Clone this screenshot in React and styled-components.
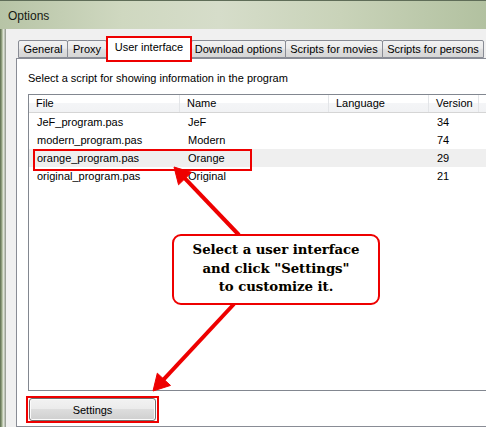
import React from "react";
import styled, { createGlobalStyle } from "styled-components";

const GlobalStyle = createGlobalStyle`
  html, body { margin: 0; padding: 0; background: #f0f0f0; }
  body { font-family: "Liberation Sans", Arial, sans-serif; }
  * { box-sizing: border-box; }
`;

const Window = styled.div`
  position: relative;
  width: 486px;
  height: 427px;
  overflow: hidden;
  display: flex;
  flex-direction: column;
  background: linear-gradient(90deg, #b7c4a6 0%, #cfd8c0 25%, #d6ddca 45%, #c9d3b9 70%, #b2c1a0 100%);
  border-top: 1px solid #5f6d58;
`;

const TitleBar = styled.div`
  height: 28px;
  flex: none;
  display: flex;
  align-items: center;
  padding: 1px 0 0 8px;
  font-size: 12px;
  color: #141a12;
`;

const Body = styled.div`
  flex: 1;
  display: flex;
  min-height: 0;
`;

const FrameEdge = styled.div`
  width: 6px;
  flex: none;
  background: linear-gradient(90deg, #56654a 0, #7d8d6c 1px, #9aa987 2px, #d7ddcd 3px, #e3e8dc 4px, #9ba197 5px);
`;

const Client = styled.div`
  flex: 1;
  min-width: 0;
  background: #f0f0f0;
  padding: 7px 0 0 10px;
  display: flex;
  flex-direction: column;
`;

const TabStrip = styled.div`
  height: 22px;
  flex: none;
  display: flex;
  align-items: flex-end;
  padding-left: 2px;
  position: relative;
  z-index: 2;
`;

const Tab = styled.div`
  position: relative;
  flex: none;
  width: ${(p) => p.$w}px;
  height: ${(p) => (p.$active ? 22 : 18)}px;
  margin-left: ${(p) => (p.$first ? 0 : -1)}px;
  margin-bottom: ${(p) => (p.$active ? -1 : 0)}px;
  border: 1px solid #898c95;
  border-bottom: ${(p) => (p.$active ? "none" : "1px solid #898c95")};
  border-radius: 2px 2px 0 0;
  background: ${(p) =>
    p.$active ? "#ffffff" : "linear-gradient(#f2f2f2 0%, #ebebeb 45%, #dedede 55%, #d6d6d6 100%)"};
  font-size: 11px;
  color: #000;
  display: flex;
  justify-content: center;
  align-items: ${(p) => (p.$active ? "flex-start" : "center")};
  padding-top: ${(p) => (p.$active ? 3 : 0)}px;
  white-space: nowrap;
  z-index: ${(p) => (p.$active ? 2 : 1)};

  ${(p) =>
    p.$marked &&
    `&::after {
      content: "";
      position: absolute;
      left: -1px;
      right: -1px;
      top: -2px;
      bottom: -3px;
      border: 2px solid #ee0000;
    }`}
`;

const Panel = styled.div`
  flex: 1;
  width: 520px;
  background: #ffffff;
  border: 1px solid #898c95;
  padding: 11px 0 0 11px;
  display: flex;
  flex-direction: column;
  align-items: flex-start;
`;

const Hint = styled.p`
  margin: 0 0 8px;
  font-size: 11px;
  line-height: 16px;
  color: #000;
`;

const ListBox = styled.div`
  width: 520px;
  height: 297px;
  border: 1px solid #828790;
  background: #fff;
  flex: none;
`;

const COLS = "151px 149px 100px 50px 1fr";

const HeaderRow = styled.div`
  display: grid;
  grid-template-columns: ${COLS};
  height: 18px;
  background: linear-gradient(#ffffff 0%, #ffffff 45%, #f4f5f7 50%, #f1f2f4 100%);
  border-bottom: 1px solid #d5d5d5;
`;

const HeaderCell = styled.div`
  font-size: 11px;
  line-height: 17px;
  padding-left: 7px;
  border-right: 1px solid #e3e5e8;
  color: #000;
  white-space: nowrap;
`;

const Row = styled.div`
  position: relative;
  display: grid;
  grid-template-columns: ${COLS};
  height: 18px;
  background: ${(p) => (p.$selected ? "#efefef" : "transparent")};

  ${(p) =>
    p.$marked &&
    `&::after {
      content: "";
      position: absolute;
      left: 4px;
      top: 0;
      width: 215px;
      height: 18px;
      border: 2px solid #ee0000;
    }`}
`;

const Cell = styled.div`
  font-size: 11px;
  line-height: 18px;
  padding-left: 8px;
  color: #000;
  white-space: nowrap;
`;

const MarkFrame = styled.div`
  margin: 5px 0 0 -2px;
  flex: none;
  border: 2px solid #ee0000;
  padding: 0 1px;
  display: flex;
`;

const Button = styled.button`
  width: 127px;
  height: 23px;
  border: 1px solid #707070;
  border-radius: 3px;
  background: linear-gradient(#f2f2f2 0%, #ebebeb 50%, #dddddd 50%, #cfcfcf 100%);
  box-shadow: inset 0 0 0 1px #fbfbfb;
  font-family: "Liberation Sans", Arial, sans-serif;
  font-size: 11px;
  color: #000;
  padding: 0;
`;

const Overlay = styled.svg`
  position: absolute;
  left: 0;
  top: 0;
  pointer-events: none;
  z-index: 5;
`;

const Callout = styled.div`
  position: absolute;
  left: 172px;
  top: 233px;
  width: 208px;
  height: 71px;
  border: 2px solid #ee0000;
  border-radius: 9px;
  background: #ffffff;
  z-index: 6;
  padding-top: 5px;
  text-align: center;
  font-family: "DejaVu Serif", "Liberation Serif", serif;
  font-weight: bold;
  font-size: 13.2px;
  line-height: 18.5px;
  color: #000;
  text-shadow: 0.4px 0 0 rgba(230, 150, 0, 0.35);
`;

function Arrow({ from, to, head = 16, spread = 9, width = 4 }) {
  const [x1, y1] = from;
  const [x2, y2] = to;
  const dx = x2 - x1;
  const dy = y2 - y1;
  const len = Math.hypot(dx, dy);
  const ux = dx / len;
  const uy = dy / len;
  const px = -uy;
  const py = ux;
  const bx = x2 - ux * head;
  const by = y2 - uy * head;
  return (
    <g fill="#ee0000" stroke="#ee0000">
      <line x1={x1} y1={y1} x2={bx + ux * 3} y2={by + uy * 3} strokeWidth={width} />
      <polygon
        points={`${x2},${y2} ${bx + px * spread},${by + py * spread} ${bx - px * spread},${by - py * spread}`}
        strokeWidth={1}
      />
    </g>
  );
}

const tabs = [
  { label: "General", w: 50 },
  { label: "Proxy", w: 40 },
  { label: "User interface", w: 86, active: true },
  { label: "Download options", w: 95 },
  { label: "Scripts for movies", w: 98 },
  { label: "Scripts for persons", w: 102 },
];

const rows = [
  { file: "JeF_program.pas", name: "JeF", lang: "", ver: "34" },
  { file: "modern_program.pas", name: "Modern", lang: "", ver: "74" },
  { file: "orange_program.pas", name: "Orange", lang: "", ver: "29", selected: true },
  { file: "original_program.pas", name: "Original", lang: "", ver: "21" },
];

export default function App() {
  return (
    <>
      <GlobalStyle />
      <Window>
        <TitleBar>Options</TitleBar>
        <Body>
          <FrameEdge />
          <Client>
            <TabStrip>
              {tabs.map((t, i) => (
                <Tab key={t.label} $w={t.w} $active={t.active} $marked={t.active} $first={i === 0}>
                  {t.label}
                </Tab>
              ))}
            </TabStrip>
            <Panel>
              <Hint>Select a script for showing information in the program</Hint>
              <ListBox>
                <HeaderRow>
                  <HeaderCell>File</HeaderCell>
                  <HeaderCell>Name</HeaderCell>
                  <HeaderCell>Language</HeaderCell>
                  <HeaderCell>Version</HeaderCell>
                  <HeaderCell />
                </HeaderRow>
                {rows.map((r) => (
                  <Row key={r.file} $selected={r.selected} $marked={r.selected}>
                    <Cell>{r.file}</Cell>
                    <Cell>{r.name}</Cell>
                    <Cell>{r.lang}</Cell>
                    <Cell>{r.ver}</Cell>
                    <Cell />
                  </Row>
                ))}
              </ListBox>
              <MarkFrame>
                <Button>Settings</Button>
              </MarkFrame>
            </Panel>
          </Client>
        </Body>
        <Overlay width="486" height="427" viewBox="0 0 486 427">
          <Arrow from={[239, 234]} to={[174, 166]} />
          <Arrow from={[234, 303]} to={[153, 390]} />
        </Overlay>
        <Callout>
          Select a user interface
          <br />
          and click "Settings"
          <br />
          to customize it.
        </Callout>
      </Window>
    </>
  );
}
